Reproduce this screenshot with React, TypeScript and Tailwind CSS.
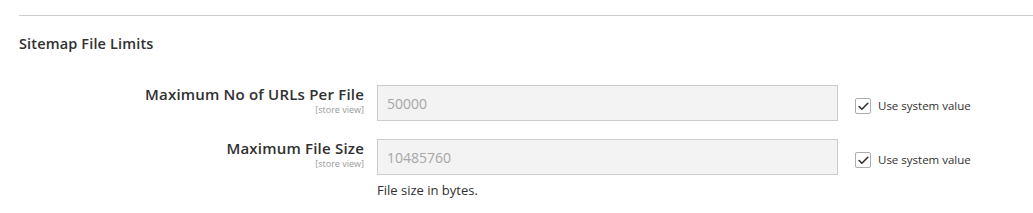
import { Check } from 'lucide-react';

type Field = {
  label: string;
  value: string;
  note?: string;
};

const fields: Field[] = [
  { label: 'Maximum No of URLs Per File', value: '50000' },
  { label: 'Maximum File Size', value: '10485760', note: 'File size in bytes.' },
];

function FieldRow({ field }: { field: Field }) {
  return (
    <div className="flex items-start">
      <div className="w-[345px] shrink-0 text-right">
        <div className="text-[15px] font-semibold leading-[19px] tracking-[0.2px] text-[#303030]">{field.label}</div>
        <div className="text-[9px] leading-[11px] text-[#999999]">[store view]</div>
      </div>
      <div className="ml-[13px] w-[461px] shrink-0">
        <div className="flex h-[36px] items-center border border-[#cccccc] bg-[#f3f3f3] px-[9px] text-[14px] text-[#a6a6a6]">
          {field.value}
        </div>
        {field.note && (
          <div className="mt-[7px] text-[13px] leading-[16px] text-[#303030]">{field.note}</div>
        )}
      </div>
      <div className="ml-[17px] flex items-center pt-[13px]">
        <span className="flex h-[16px] w-[16px] items-center justify-center rounded-[2px] border border-[#adadad] bg-white">
          <Check className="h-[13px] w-[13px] text-[#303030]" strokeWidth={3} />
        </span>
        <span className="ml-[7px] text-[11.5px] leading-[16px] text-[#303030]">Use system value</span>
      </div>
    </div>
  );
}

export default function App() {
  return (
    <div className="h-[213px] w-[1033px] overflow-hidden bg-white pl-[19px] pt-[15px] font-['Open_Sans',sans-serif]">
      <div className="border-t border-[#cccccc]" />
      <div className="mt-[18px] text-[14.5px] font-semibold leading-[19px] tracking-[0.15px] text-[#303030]">Sitemap File Limits</div>
      <div className="mt-[32px] flex flex-col gap-[18px]">
        {fields.map((f) => (
          <FieldRow key={f.label} field={f} />
        ))}
      </div>
    </div>
  );
}
